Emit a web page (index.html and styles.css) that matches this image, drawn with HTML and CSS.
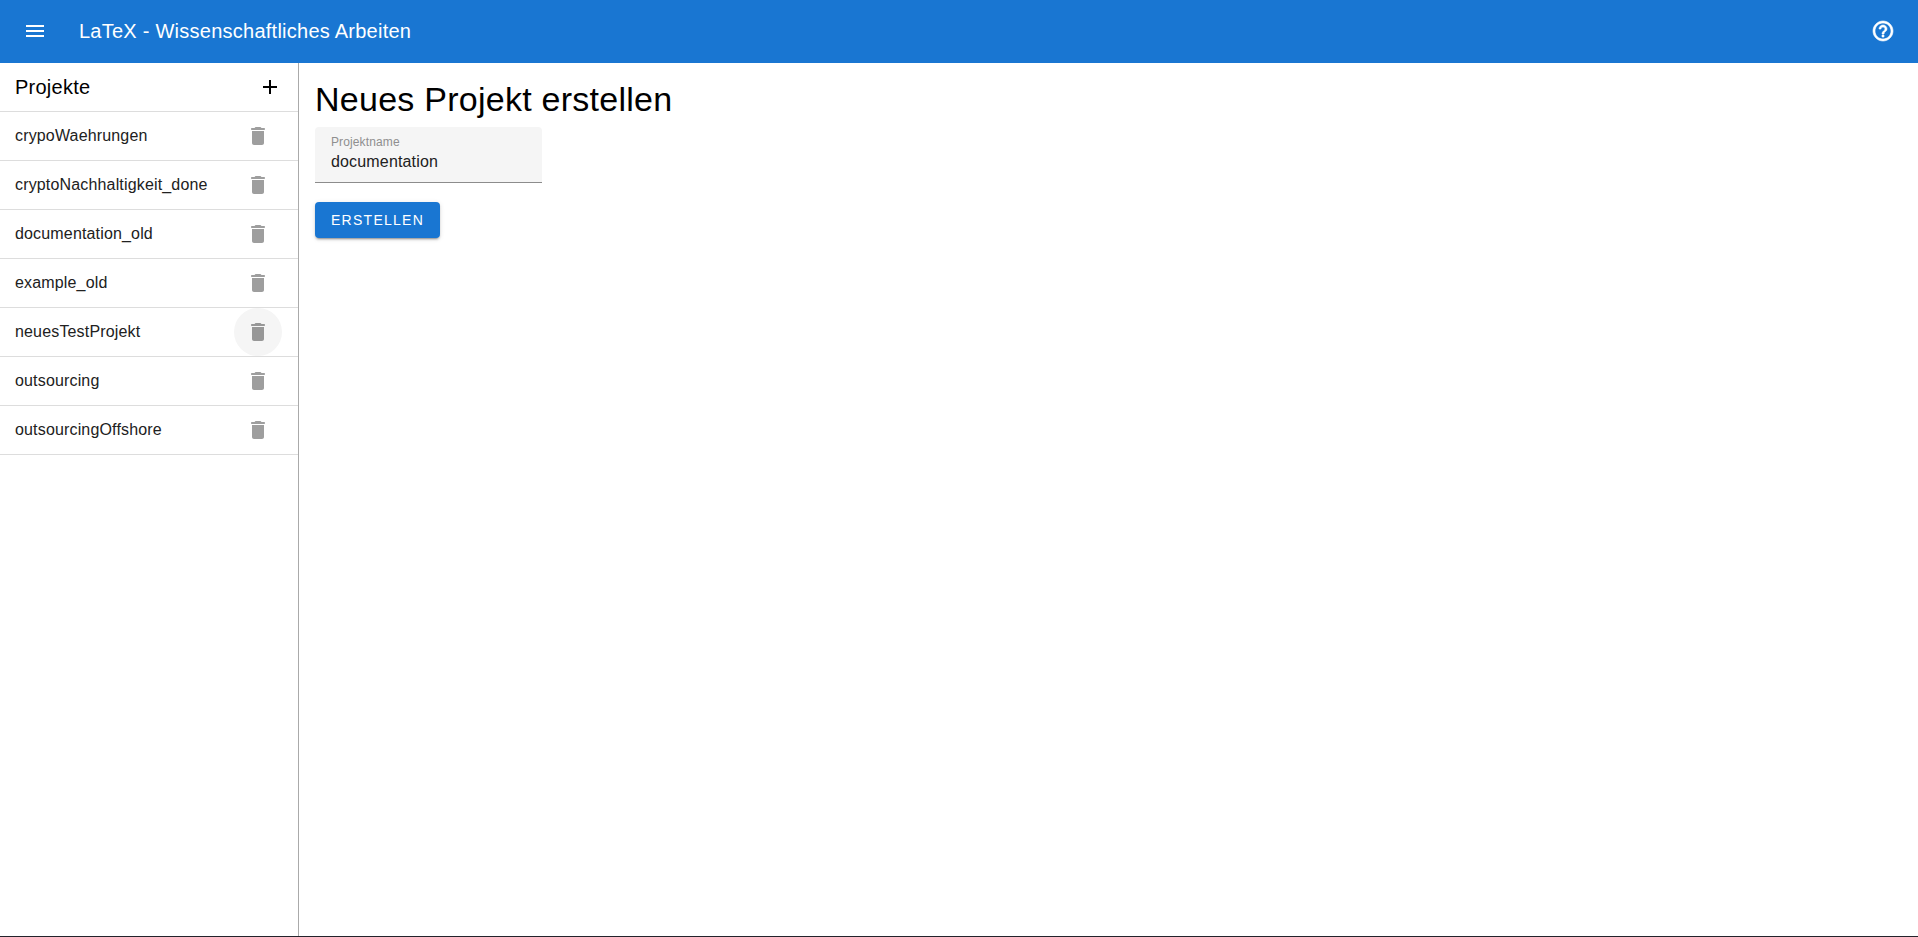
FILE: index.html
```html
<!DOCTYPE html>
<html lang="de">
<head>
<meta charset="utf-8">
<title>LaTeX - Wissenschaftliches Arbeiten</title>
<link rel="stylesheet" href="styles.css">
</head>
<body>
<svg class="sprite" aria-hidden="true">
  <symbol id="trash" viewBox="0 0 24 24"><path d="M6 19c0 1.100.9 2 2 2h8c1.100 0 2-.9 2-2V7H6v12zM18 4h-2.500l-1-1h-5l-1 1H6c-.6 0-1 .4-1 1s.4 1 1 1h12c.6 0 1-.4 1-1s-.4-1-1-1z"/></symbol>
</svg>
<header class="app-bar">
  <button class="icon-button" type="button" aria-label="Menü">
    <svg class="icon" viewBox="0 0 24 24"><path d="M3 18h18v-2H3v2zm0-5h18v-2H3v2zm0-7v2h18V6H3z"/></svg>
  </button>
  <span class="app-title">LaTeX - Wissenschaftliches Arbeiten</span>
  <button class="icon-button" type="button" aria-label="Hilfe">
    <svg class="icon icon-bold" viewBox="0 0 24 24"><path d="M11 18h2v-2h-2v2zm1-16C6.480 2 2 6.480 2 12s4.480 10 10 10 10-4.480 10-10S17.520 2 12 2zm0 18c-4.410 0-8-3.590-8-8s3.590-8 8-8 8 3.590 8 8-3.590 8-8 8zm0-14c-2.210 0-4 1.790-4 4h2c0-1.100.9-2 2-2s2 .9 2 2c0 2-3 1.750-3 5h2c0-2.250 3-2.500 3-5 0-2.210-1.790-4-4-4z"/></svg>
  </button>
</header>
<div class="layout">
  <nav class="sidebar" aria-label="Projekte">
    <div class="sidebar-header">
      <h2 class="sidebar-title">Projekte</h2>
      <button class="add-button" type="button" aria-label="Projekt hinzufügen">
        <svg class="icon" viewBox="0 0 24 24"><path d="M19 13h-6v6h-2v-6H5v-2h6V5h2v6h6v2z"/></svg>
      </button>
    </div>
    <ul class="projects">
      <li class="project"><a class="project-link" href="#crypoWaehrungen">crypoWaehrungen</a><button class="icon-button delete" type="button" aria-label="crypoWaehrungen löschen"><svg class="icon"><use href="#trash"/></svg></button></li>
      <li class="project"><a class="project-link" href="#cryptoNachhaltigkeit_done">cryptoNachhaltigkeit_done</a><button class="icon-button delete" type="button" aria-label="cryptoNachhaltigkeit_done löschen"><svg class="icon"><use href="#trash"/></svg></button></li>
      <li class="project"><a class="project-link" href="#documentation_old">documentation_old</a><button class="icon-button delete" type="button" aria-label="documentation_old löschen"><svg class="icon"><use href="#trash"/></svg></button></li>
      <li class="project"><a class="project-link" href="#example_old">example_old</a><button class="icon-button delete" type="button" aria-label="example_old löschen"><svg class="icon"><use href="#trash"/></svg></button></li>
      <li class="project"><a class="project-link" href="#neuesTestProjekt">neuesTestProjekt</a><button class="icon-button delete active" type="button" aria-label="neuesTestProjekt löschen"><svg class="icon"><use href="#trash"/></svg></button></li>
      <li class="project"><a class="project-link" href="#outsourcing">outsourcing</a><button class="icon-button delete" type="button" aria-label="outsourcing löschen"><svg class="icon"><use href="#trash"/></svg></button></li>
      <li class="project"><a class="project-link" href="#outsourcingOffshore">outsourcingOffshore</a><button class="icon-button delete" type="button" aria-label="outsourcingOffshore löschen"><svg class="icon"><use href="#trash"/></svg></button></li>
    </ul>
  </nav>
  <main class="content">
    <h1 class="heading">Neues Projekt erstellen</h1>
    <form class="form">
      <div class="field">
        <label class="field-label" for="name">Projektname</label>
        <input class="field-input" id="name" type="text" value="documentation">
      </div>
      <button class="submit" type="button">ERSTELLEN</button>
    </form>
  </main>
</div>
</body>
</html>
```
FILE: styles.css
```css
* {
  box-sizing: border-box;
}

body {
  display: flex;
  flex-direction: column;
  min-height: 100vh;
  margin: 0;
  border-bottom: 1px solid #23232b;
  background: #fff;
  color: #000;
  font-family: "Liberation Sans", Arial, sans-serif;
  font-size: 16px;
}

button {
  border: 0;
  font-family: inherit;
  cursor: pointer;
}

.sprite {
  display: none;
}

.icon {
  display: block;
  width: 24px;
  height: 24px;
  fill: currentColor;
}

.icon-bold {
  stroke: currentColor;
  stroke-width: 0.6;
}

.icon-button {
  flex: none;
  width: 48px;
  height: 48px;
  padding: 12px;
  border-radius: 50%;
  background: transparent;
  color: inherit;
}

.app-bar {
  display: flex;
  align-items: center;
  padding: 7px 11px 8px;
  background: #1976d2;
  color: #fff;
}

.app-title {
  flex: 1;
  padding-left: 20px;
  font-size: 20px;
  line-height: 32px;
  letter-spacing: 0.0125em;
}

.layout {
  display: flex;
  flex: 1;
}

.sidebar {
  flex: none;
  width: 299px;
  border-right: 1px solid #aaa;
}

.sidebar-header {
  display: flex;
  align-items: center;
  justify-content: space-between;
  height: 49px;
  padding: 0 16px 0 15px;
  border-bottom: 1px solid #ddd;
}

.sidebar-title {
  margin: 0;
  font-size: 20px;
  font-weight: 400;
  line-height: 32px;
  letter-spacing: 0.0125em;
}

.add-button {
  padding: 0;
  background: transparent;
  color: #000;
}

.projects {
  margin: 0;
  padding: 0;
  list-style: none;
}

.project {
  display: flex;
  align-items: center;
  padding: 0 16px 0 15px;
  border-bottom: 1px solid #ddd;
}

.project-link {
  flex: 1;
  color: #212121;
  text-decoration: none;
  letter-spacing: 0.01em;
}

.delete {
  color: #9e9e9e;
}

.delete.active {
  background: #f5f5f5;
  color: #979797;
}

.content {
  flex: 1;
  padding: 16px;
}

.heading {
  margin: 0 0 8px;
  font-size: 34px;
  font-weight: 400;
  line-height: 40px;
  letter-spacing: 0.0075em;
}

.form {
  display: flex;
  flex-direction: column;
  align-items: flex-start;
  gap: 19px;
}

.field {
  display: flex;
  flex-direction: column;
  width: 227px;
  height: 56px;
  padding: 7px 16px 0;
  border-bottom: 1px solid #8c8c8c;
  border-radius: 4px 4px 0 0;
  background: #f5f5f5;
}

.field-label {
  color: #8f8f8f;
  font-size: 12px;
  line-height: 16px;
  letter-spacing: 0.01em;
}

.field-input {
  width: 100%;
  height: 24px;
  padding: 0;
  border: 0;
  outline: 0;
  background: transparent;
  color: #212121;
  font-family: inherit;
  font-size: 16px;
  letter-spacing: 0.01em;
}

.submit {
  height: 36px;
  padding: 0 16px;
  border-radius: 4px;
  background: #1976d2;
  box-shadow: 0 3px 1px -2px rgba(0, 0, 0, 0.2), 0 2px 2px rgba(0, 0, 0, 0.14), 0 1px 5px rgba(0, 0, 0, 0.12);
  color: #fff;
  font-size: 14px;
  font-weight: 500;
  letter-spacing: 0.09em;
}
```
